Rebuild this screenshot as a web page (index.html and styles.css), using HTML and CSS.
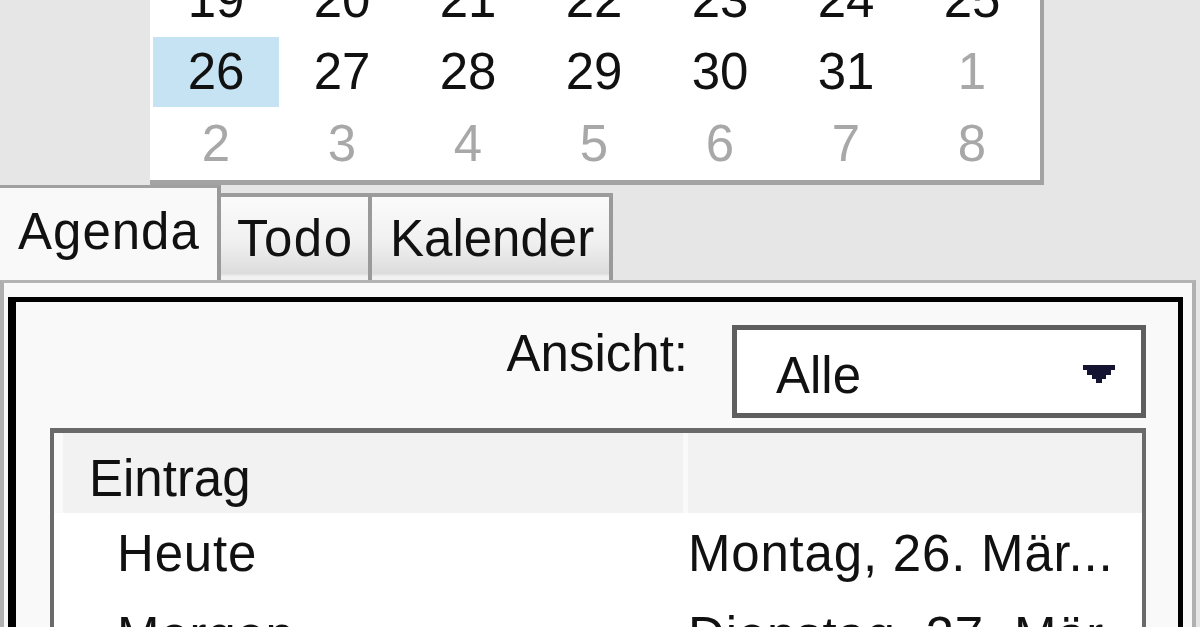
FILE: index.html
```html
<!DOCTYPE html>
<html lang="de">
<head>
<meta charset="utf-8">
<title>Agenda</title>
<link rel="stylesheet" href="styles.css">
</head>
<body>
<div class="calendar">
  <div class="cal-grid">
    <div class="day">19</div><div class="day">20</div><div class="day">21</div><div class="day">22</div><div class="day">23</div><div class="day">24</div><div class="day">25</div>
    <div class="day today">26</div><div class="day">27</div><div class="day">28</div><div class="day">29</div><div class="day">30</div><div class="day">31</div><div class="day other">1</div>
    <div class="day other">2</div><div class="day other">3</div><div class="day other">4</div><div class="day other">5</div><div class="day other">6</div><div class="day other">7</div><div class="day other">8</div>
  </div>
</div>
<div class="tabs">
  <div class="tab active">Agenda</div>
  <div class="tab inactive todo">Todo</div>
  <div class="tab inactive kal">Kalender</div>
</div>
<div class="panel">
  <div class="frame">
    <div class="toolbar">
      <span class="label">Ansicht:</span>
      <div class="combo">
        <span>Alle</span>
        <svg class="arrow" width="32" height="18" viewBox="0 0 32 18"><polygon points="0,0 32,0 32,5 28,5 28,10 23,10 23,14 19,14 19,18 13,18 13,14 9,14 9,10 4,10 4,5 0,5" fill="#141432"/></svg>
      </div>
    </div>
    <div class="list">
      <div class="list-head">
        <div class="hcell first">Eintrag</div>
        <div class="hcell second"></div>
      </div>
      <div class="row">
        <div class="c1">Heute</div>
        <div class="c2">Montag, 26. Mär...</div>
      </div>
      <div class="row">
        <div class="c1">Morgen</div>
        <div class="c2">Dienstag, 27. Mär...</div>
      </div>
    </div>
  </div>
</div>
</body>
</html>
```
FILE: styles.css
```css
html, body {
  margin: 0;
}
body {
  width: 1200px;
  height: 627px;
  overflow: hidden;
  background: #e6e6e6;
  font-family: "Liberation Sans", Arial, sans-serif;
  font-size: 51px;
  color: #111;
}

.calendar {
  margin-top: -36px;
  margin-left: 150px;
  width: 882px;
  padding: 0 5px 0 3px;
  background: #fff;
  border-right: 4px solid #a3a3a3;
  border-bottom: 5px solid #a3a3a3;
}
.cal-grid {
  display: grid;
  grid-template-columns: repeat(7, 126px);
  grid-auto-rows: 72px;
}
.day {
  text-align: center;
  line-height: 72px;
}
.day.other {
  color: #a8a8a8;
}
.day.today {
  background: #c6e3f3;
  margin: 1px 0;
  line-height: 70px;
}

.tabs {
  display: flex;
  height: 95px;
}
.tab {
  box-sizing: border-box;
  line-height: 57px;
  white-space: nowrap;
}
.tab.active {
  width: 221px;
  height: 95px;
  background: #f9f9f9;
  border-top: 3px solid #a0a0a0;
  border-right: 4px solid #9a9a9a;
  padding: 15px 0 0 18px;
  letter-spacing: 1px;
}
.tab.inactive {
  margin-top: 8px;
  height: 87px;
  border-top: 4px solid #9c9c9c;
  border-right: 4px solid #9a9a9a;
  padding-top: 13px;
  background: linear-gradient(#fbfbfb 0%, #f0f0f0 55%, #dcdcdc 92%, #f2f2f2 96%, #f2f2f2 100%);
}
.tab.todo {
  width: 151px;
  padding-left: 16px;
  letter-spacing: 1.5px;
}
.tab.kal {
  width: 241px;
  padding-left: 18px;
}

.panel {
  height: 330px;
  margin-right: 4px;
  background: #f9f9f9;
  border-top: 3px solid #b4b4b4;
  border-left: 4px solid #b0b0b0;
  border-right: 4px solid #b0b0b0;
  padding: 14px 9px 0 4px;
}
.frame {
  height: 302px;
  overflow: hidden;
  background: #f9f9f9;
  border-top: 5px solid #000;
  border-left: 8px solid #000;
  border-right: 5px solid #000;
  padding: 23px 32px 0 34px;
}

.toolbar {
  display: flex;
  justify-content: flex-end;
  align-items: flex-start;
  gap: 44px;
}
.label {
  line-height: 57px;
}
.combo {
  box-sizing: border-box;
  width: 414px;
  height: 93px;
  border: 5px solid #5e5e5e;
  background: #fff;
  display: flex;
  justify-content: space-between;
  align-items: flex-start;
  padding: 17px 26px 0 39px;
  line-height: 57px;
}
.arrow {
  display: block;
  margin-top: 18px;
}

.list {
  margin-top: 10px;
  height: 300px;
  background: #fff;
  border-top: 5px solid #6a6a6a;
  border-left: 4px solid #6a6a6a;
  border-right: 4px solid #6a6a6a;
}
.list-head {
  display: flex;
  height: 80px;
  padding-left: 9px;
  background: #fafafa;
}
.hcell {
  box-sizing: border-box;
  height: 80px;
  background: #f2f2f2;
  line-height: 57px;
}
.hcell.first {
  width: 625px;
  padding: 17px 0 0 26px;
  border-right: 5px solid #fafafa;
}
.hcell.second {
  flex: 1;
}

.row {
  display: flex;
  height: 82px;
  line-height: 57px;
  letter-spacing: 0.8px;
}
.c1 {
  box-sizing: border-box;
  width: 634px;
  padding: 12px 0 0 63px;
}
.c2 {
  flex: 1;
  padding-top: 12px;
  white-space: nowrap;
  overflow: hidden;
}
```
